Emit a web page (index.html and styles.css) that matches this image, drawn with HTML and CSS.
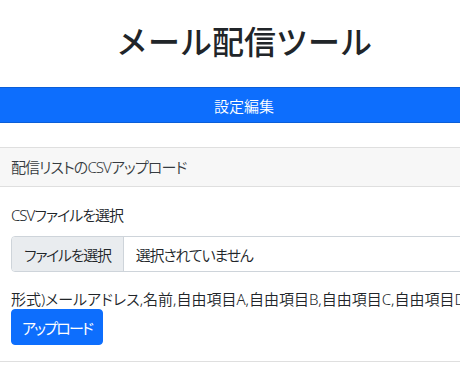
FILE: index.html
```html
<!DOCTYPE html>
<html lang="ja">
<head>
<meta charset="utf-8">
<title>メール配信ツール</title>
<link rel="stylesheet" href="styles.css">
</head>
<body>
<div class="page">
  <h1 class="title">メール配信ツール</h1>
  <button class="bar-btn" type="button">設定編集</button>
  <section class="card">
    <div class="card-header">配信リストのCSVアップロード</div>
    <div class="card-body">
      <div class="label">CSVファイルを選択</div>
      <div class="file-input">
        <span class="file-btn">ファイルを選択</span>
        <span class="file-name">選択されていません</span>
      </div>
      <p class="format">形式)メールアドレス,名前,自由項目A,自由項目B,自由項目C,自由項目D</p>
      <button class="upload-btn" type="button">アップロード</button>
    </div>
  </section>
</div>
</body>
</html>
```

FILE: styles.css
```css
html, body {
  margin: 0;
  padding: 0;
  background: #fff;
  overflow: hidden;
}
body {
  font-family: "Noto Sans", "Noto Sans CJK JP", sans-serif;
  font-feature-settings: "palt";
  font-weight: 350;
  color: #212529;
  font-size: 15px;
}
.page {
  width: 488px;
  display: flex;
  flex-direction: column;
}
.title {
  margin: 0 0 21px;
  padding-top: 18px;
  font-size: 32px;
  line-height: 48px;
  font-weight: 500;
  text-align: center;
  font-feature-settings: normal;
}
.bar-btn {
  height: 36px;
  border: 0;
  border-top: 1px solid #0b5ed7;
  border-bottom: 1px solid #0b5ed7;
  background: #0d6efd;
  color: #fff;
  font: inherit;
  font-size: 15px;
  padding: 0;
}
.card {
  margin-top: 24px;
  border-top: 1px solid #dfdfdf;
  border-bottom: 1px solid #dfdfdf;
}
.card-header {
  background: #f7f7f7;
  border-bottom: 1px solid #dfdfdf;
  padding: 7px 11px;
  line-height: 24px;
  letter-spacing: -0.9px;
  color: #363b40;
}
.card-body {
  padding: 16px 11px 16px;
  display: flex;
  flex-direction: column;
  align-items: flex-start;
}
.label {
  line-height: 24px;
  margin-bottom: 9px;
  letter-spacing: -1px;
}
.file-input {
  align-self: stretch;
  height: 36px;
  box-sizing: border-box;
  border: 1px solid #ced4da;
  border-radius: 4px;
  display: flex;
  align-items: stretch;
  overflow: hidden;
}
.file-btn {
  background: #e9ecef;
  border-right: 1px solid #ced4da;
  padding: 0 12px;
  display: flex;
  align-items: center;
  letter-spacing: -1.3px;
}
.file-name {
  padding: 0 12px;
  display: flex;
  align-items: center;
  letter-spacing: -1.2px;
}
.format {
  margin: 17px 0 0;
  line-height: 20px;
  font-size: 15px;
  white-space: nowrap;
}
.upload-btn {
  height: 36px;
  border: 1px solid #0d6efd;
  border-radius: 4px;
  background: #0d6efd;
  color: #fff;
  font: inherit;
  font-weight: 400;
  font-size: 15px;
  letter-spacing: -1.8px;
  padding: 0 10px;
}
```
